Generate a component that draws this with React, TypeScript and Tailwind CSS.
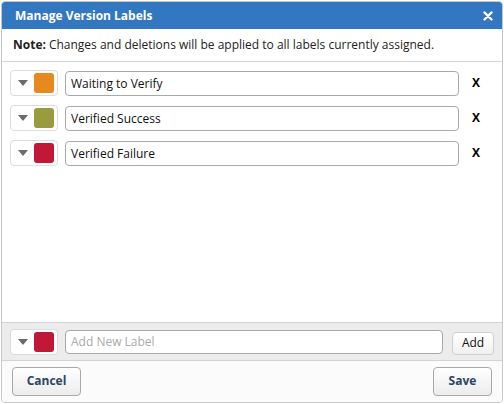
import { useState } from 'react';

type Label = { id: number; name: string; color: string };

const initialLabels: Label[] = [
  { id: 1, name: 'Waiting to Verify', color: '#e6891f' },
  { id: 2, name: 'Verified Success', color: '#989b3f' },
  { id: 3, name: 'Verified Failure', color: '#c11838' },
];

function ColorChip({ color }: { color: string }) {
  return (
    <button className="flex h-[26px] w-[48px] shrink-0 items-center justify-between rounded-[4px] border border-[#dcdcdc] bg-white pl-[7px] pr-[3px]">
      <svg width="10" height="6" viewBox="0 0 10 6">
        <path d="M0 0 H10 L5 6 Z" fill="#6b6b6b" />
      </svg>
      <span className="h-[20px] w-[20px] rounded-[3px]" style={{ backgroundColor: color }} />
    </button>
  );
}

export default function App() {
  const [labels, setLabels] = useState(initialLabels);
  const [newLabel, setNewLabel] = useState('');

  return (
    <div className="h-[404px] w-[504px] bg-white p-[1px] font-['Open_Sans','DejaVu_Sans',sans-serif] text-[12px] text-[#222]">
      <div className="flex h-full flex-col overflow-hidden rounded-[4px] border border-[#c8c8c8]">
        {/* Header */}
        <div className="flex h-[27px] shrink-0 items-center justify-between bg-[#3377c1] pl-[13px] pr-[9px]">
          <h1 className="text-[12px] font-bold text-white">Manage Version Labels</h1>
          <svg width="10" height="10" viewBox="0 0 10 10">
            <path d="M1.5 1.5 L8.5 8.5 M8.5 1.5 L1.5 8.5" stroke="#fff" strokeWidth="2.4" strokeLinecap="round" />
          </svg>
        </div>

        {/* Note */}
        <div className="flex h-[33px] shrink-0 items-center border-b border-[#d6d6d6] px-[11px] text-[12px]">
          <span className="mr-[3px] font-bold">Note:</span>
          Changes and deletions will be applied to all labels currently assigned.
        </div>

        {/* Label list */}
        <div className="flex flex-1 flex-col gap-[9px] px-[8px] pt-[8px]">
          {labels.map((l) => (
            <div key={l.id} className="flex items-center">
              <ColorChip color={l.color} />
              <input
                value={l.name}
                onChange={(e) =>
                  setLabels((prev) => prev.map((p) => (p.id === l.id ? { ...p, name: e.target.value } : p)))
                }
                className="ml-[7px] h-[25px] w-[394px] rounded-[4px] border border-[#a9a9a9] px-[5px] text-[12px] text-[#111] outline-none"
              />
              <button
                onClick={() => setLabels((prev) => prev.filter((p) => p.id !== l.id))}
                className="ml-[13px] text-[12px] font-bold text-black"
              >
                X
              </button>
            </div>
          ))}
        </div>

        {/* Add new */}
        <div className="flex h-[39px] shrink-0 items-center border-y border-[#d2d2d2] bg-[#ececec] px-[8px]">
          <ColorChip color="#c11838" />
          <input
            value={newLabel}
            onChange={(e) => setNewLabel(e.target.value)}
            placeholder="Add New Label"
            className="ml-[7px] h-[24px] w-[379px] rounded-[4px] border border-[#a9a9a9] bg-white px-[5px] text-[12px] placeholder:text-[#aaa] outline-none"
          />
          <button className="ml-[9px] mt-[3px] h-[23px] w-[42px] rounded-[4px] border border-[#d0d0d0] bg-gradient-to-b from-white to-[#f0f0f0] text-[12px] text-[#111]">
            Add
          </button>
        </div>

        {/* Footer */}
        <div className="flex h-[41px] shrink-0 items-center justify-between bg-[#fbfbfb] px-[10px] pb-[1px]">
          <button className="h-[29px] w-[69px] rounded-[4px] border border-[#a8a8a8] bg-gradient-to-b from-white to-[#ececec] text-[12px] font-bold text-[#2b4666]">
            Cancel
          </button>
          <button className="h-[29px] w-[59px] rounded-[4px] border border-[#a8a8a8] bg-gradient-to-b from-white to-[#ececec] text-[12px] font-bold text-[#2b4666]">
            Save
          </button>
        </div>
      </div>
    </div>
  );
}
